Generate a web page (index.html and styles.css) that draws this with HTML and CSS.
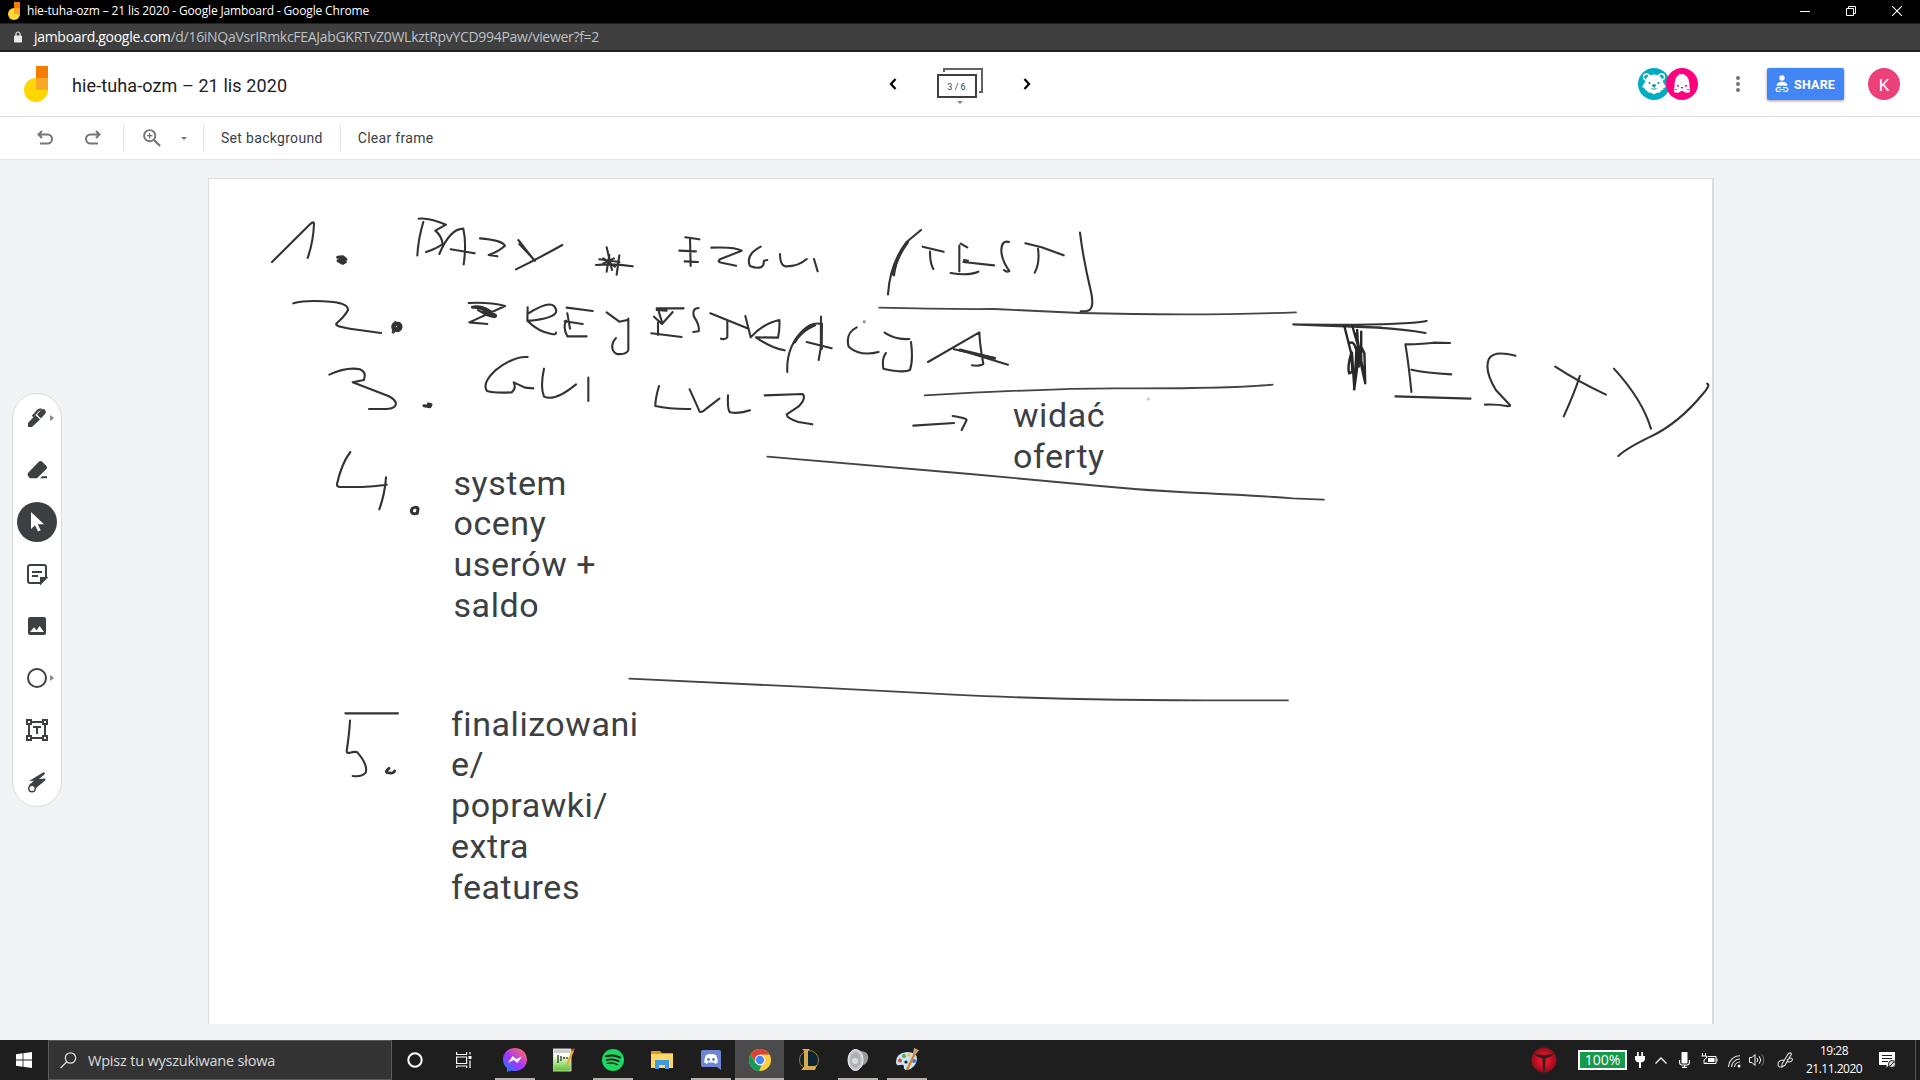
FILE: index.html
```html
<!DOCTYPE html>
<html lang="pl">
<head>
<meta charset="utf-8">
<title>hie-tuha-ozm – 21 lis 2020 - Google Jamboard</title>
<link rel="stylesheet" href="styles.css">
</head>
<body>
<div class="titlebar">
  <svg class="favicon" width="12" height="18" viewBox="0 0 24 36"><circle cx="12" cy="24" r="12" fill="#fdd835"/><path fill="#f57c00" d="M12 0h12v12H12z"/><path fill="#f9a825" d="M12 12h12v12H12z"/></svg>
  <span class="window-title">hie-tuha-ozm – 21 lis 2020 - Google Jamboard - Google Chrome</span>
  <div class="window-controls">
    <svg width="10" height="10"><path d="M0 5.500h10" stroke="#fff"/></svg>
    <svg width="10" height="10" fill="none" stroke="#fff"><path d="M.5 2.500h7v7h-7zM2.500 2.500v-2h7v7h-2"/></svg>
    <svg width="10" height="10"><path d="M0 0l10 10M10 0L0 10" stroke="#fff" stroke-width="1.100"/></svg>
  </div>
</div>
<div class="addressbar">
  <svg width="8" height="12" viewBox="0 0 8 12"><path d="M2 5V3a2 2 0 0 1 4 0v2" fill="none" stroke="#e8eaed" stroke-width="1.200"/><rect y="4.500" width="8" height="7" rx=".8" fill="#e8eaed"/></svg>
  <span class="url"><b>jamboard.google.com</b>/d/16iNQaVsrIRmkcFEAJabGKRTvZ0WLkztRpvYCD994Paw/viewer?f=2</span>
</div>

<header class="header">
  <div class="brand">
    <svg width="24" height="36" viewBox="0 0 24 36"><circle cx="12" cy="24" r="12" fill="#ffd600"/><path fill="#f57c00" d="M12 0h12v12H12z"/><path fill="#f9a825" d="M12 12h12v12H12z"/></svg>
    <h1 class="doc-title">hie-tuha-ozm – 21 lis 2020</h1>
  </div>
  <div class="frame-nav">
    <svg width="8" height="12" viewBox="0 0 8 12"><path d="M6.500 1L2 6l4.500 5" fill="none" stroke="#000" stroke-width="2.200"/></svg>
    <div class="frames">
      <svg width="46" height="36" viewBox="0 0 46 36" fill="none"><path d="M7 4V1h38v23h-3" stroke="#5f6368" stroke-width="2"/><path d="M1 7h38v22H1z" stroke="#3c4043" stroke-width="2"/><path d="M20 33h6l-3 3z" fill="#80868b"/></svg>
      <span class="frame-count">3 / 6</span>
    </div>
    <svg width="8" height="12" viewBox="0 0 8 12"><path d="M1.500 1L6 6l-4.500 5" fill="none" stroke="#000" stroke-width="2.200"/></svg>
  </div>
  <div class="account">
    <div class="viewers">
      <svg width="32" height="32" viewBox="0 0 32 32"><circle cx="16" cy="16" r="16" fill="#00acc1"/><circle cx="8.500" cy="9" r="3" fill="#00acc1" stroke="#fff" stroke-width="1.300"/><circle cx="23.500" cy="9" r="3" fill="#00acc1" stroke="#fff" stroke-width="1.300"/><path fill="#fff" d="M16 6.500c5 0 8.500 3 9 7.500l3 5-2.500 1-.5 2-2 .5-1 2-3 .3-3 1.700-3-1.700-3-.3-1-2-2-.5-.5-2-2.500-1 3-5c.5-4.500 4-7.500 9-7.500z"/><g fill="#00899c"><circle cx="11.500" cy="15" r="1"/><circle cx="20.500" cy="15" r="1"/><ellipse cx="16" cy="17.500" rx="2" ry="1.200"/></g><path d="M16 18v2m-2.500.5q2.500 1.500 5 0" stroke="#00899c" stroke-width=".9" fill="none"/></svg>
      <svg class="viewer-front" width="32" height="32" viewBox="0 0 32 32"><circle cx="16" cy="16" r="16" fill="#ff007f"/><path fill="#fff" d="M8.500 19C8.500 12 10 8 13 7l.5-1.300 2 .8 2-.8L18.500 7c3.500 1 5 5 5 12l.8 2-.8 3.500-4 .3L16 22.500l-3.500 2.300-4-.3L7.700 21z"/><circle cx="12" cy="17.800" r="1" fill="#ff007f"/><circle cx="20" cy="17.800" r="1" fill="#ff007f"/><path d="M14.500 19h3L16 21z" fill="#ff007f"/><path d="M8 21.300l3.500.4M24 21.300l-3.500.4" stroke="#ff007f" stroke-width=".7"/></svg>
    </div>
    <svg width="4" height="16" viewBox="0 0 4 16" fill="#757575"><circle cx="2" cy="2" r="2"/><circle cx="2" cy="8" r="2"/><circle cx="2" cy="14" r="2"/></svg>
    <button class="share">
      <svg width="14" height="18" viewBox="0 0 14 18"><circle cx="7" cy="3" r="2.700" fill="#fff"/><path fill="#fff" d="M1.500 10.800c0-5.500 11-5.500 11 0z"/><g fill="none" stroke="#fff" stroke-width="1.200"><path d="M6 12.600H3a1.900 1.900 0 0 0 0 3.800H6M8 12.600h3a1.900 1.900 0 0 1 0 3.800H8M4.500 14.500h5"/></g></svg>
      <span>SHARE</span>
    </button>
    <span class="avatar">K</span>
  </div>
</header>

<nav class="actionbar">
  <svg class="undo" width="16" height="16" viewBox="0 0 16 16" fill="none" stroke="#757575" stroke-width="2"><path d="M5 1L1.500 4.500 5 8M2 4.500h8.500a4.200 4.200 0 0 1 0 9H3"/></svg>
  <svg class="redo" width="16" height="16" viewBox="0 0 16 16" fill="none" stroke="#757575" stroke-width="2"><path d="M11 1l3.500 3.500L11 8M14 4.500H5.500a4.200 4.200 0 0 0 0 9H13"/></svg>
  <i class="rule"></i>
  <svg class="zoom" width="18" height="18" viewBox="0 0 18 18" fill="none" stroke="#757575"><circle cx="6.700" cy="6.700" r="5.600" stroke-width="1.900"/><path d="M11 11l6 6" stroke-width="2.300"/><path d="M6.700 4v5.400M4 6.700h5.400" stroke-width="1.300"/></svg>
  <svg class="caret" width="6" height="3"><path d="M0 0h6L3 3z" fill="#757575"/></svg>
  <i class="rule"></i>
  <span class="action">Set background</span>
  <i class="rule"></i>
  <span class="action">Clear frame</span>
</nav>

<main class="workspace">
  <aside class="toolbox">
    <span class="tool"><svg width="24" height="24" viewBox="0 0 24 24" fill="#3c4043"><path d="M3 17v4h4l8-7.500L10.500 9z"/><path d="M12 8.500l4-4.500c1.500-1.500 3-1 4 0s1.200 2.500 0 4l-4.200 4.500z"/><path d="M7.500 10.500l6-6.500 3-.8" fill="none" stroke="#3c4043" stroke-width="2"/></svg><i class="more"></i></span>
    <span class="tool"><svg width="24" height="24" viewBox="0 0 24 24" fill="#3c4043"><path d="M14 3.500q1.500-1 3 0l4.500 4.500q1 1.500 0 3L12 20.200H5l-2-2.200q-1-1.500 0-3zM15 20.200l2-2h5v2z"/></svg></span>
    <span class="tool active"><svg width="24" height="24" viewBox="0 0 24 24" fill="#fff"><path d="M6 2v17l4-3.800 3 6.300 2.700-1.300-3-6H19z"/></svg></span>
    <span class="tool"><svg width="24" height="24" viewBox="0 0 24 24" fill="none" stroke="#3c4043" stroke-width="2"><path d="M15.500 21H5a2 2 0 0 1-2-2V5a2 2 0 0 1 2-2h14a2 2 0 0 1 2 2v10.500M7 10h10M7 14h6"/><path d="M16 21v-5h5z" fill="#3c4043"/></svg></span>
    <span class="tool"><svg width="24" height="24" viewBox="0 0 24 24" fill="#3c4043"><path fill-rule="evenodd" d="M5 3h14a2 2 0 0 1 2 2v14a2 2 0 0 1-2 2H5a2 2 0 0 1-2-2V5a2 2 0 0 1 2-2zm0 15h14l-4.300-6-3.200 4.300L9 13.200z"/></svg></span>
    <span class="tool"><svg width="24" height="24" viewBox="0 0 24 24"><circle cx="12" cy="12" r="9" fill="none" stroke="#3c4043" stroke-width="2"/></svg><i class="more"></i></span>
    <span class="tool"><svg width="24" height="24" viewBox="0 0 24 24" fill="none" stroke="#3c4043" stroke-width="2"><path d="M2 2h4v4H2zM18 2h4v4h-4zM2 18h4v4H2zM18 18h4v4h-4zM6 4h12M6 20h12M4 6v12M20 6v12M8 9h8M12 9v7"/></svg></span>
    <span class="tool"><svg width="24" height="24" viewBox="0 0 24 24" fill="#3c4043"><path d="M4 11L18.500 2.200q2 .2 1.200 2L14 9l6-.5q1 1 0 2L10 19l-6-4 5-4.300z"/><circle cx="7" cy="18.500" r="3.200" fill="#fff" stroke="#3c4043" stroke-width="1.400"/></svg></span>
  </aside>

  <section class="board">
    <svg class="ink" viewBox="209 179 1503 845" width="1503" height="845">
      <g transform="translate(250 200) scale(.33333)">
        <path d="M66 186L180 73Q192 62 192 72Q190 125 173 174"/>
        <path class="blot" d="M263 172l15 -2 10 8-24 4 14 8 8-4-12-6-6-8"/>
        <path d="M506 56Q535 52 588 74L556 92Q575 108 578 132Q560 146 528 156M520 66Q505 115 502 166M568 162Q600 86 640 86Q650 130 641 193M602 148L674 160M690 115Q755 120 765 137Q745 155 716 165L742 169M805 120L852 180M808 132L855 182M798 208Q860 178 937 135"/>
        <path d="M1038 195Q1090 190 1148 199M1048 178L1108 186M1070 142L1086 210M1078 165L1070 215M1108 166L1100 224M1060 190L1092 175M1060 175L1095 200"/>
        <path d="M130 310Q170 298 250 306Q295 312 294 330Q285 348 260 370Q250 378 300 386L393 399"/>
        <path class="blot" d="M436 368q-12 8-5 22 20 6 22-8 0-14-12-12-14 8-4 16 10 2 8-8"/><circle cx="430" cy="396" r="2"/>
        <path d="M656 309Q720 306 765 318L658 367L712 372M666 321Q700 312 738 346Q740 356 712 346L684 330M833 322L832 362Q850 362 880 356Q935 345 912 318Q895 302 832 342M832 362Q865 395 905 402Q918 405 918 398M950 323L1028 333M952 340L960 386M944 364L998 372M948 362Q938 385 952 409L1010 409M1070 337L1108 365L1132 360M1135 356V450Q1130 465 1100 462Q1080 450 1090 425L1098 414"/>
        <path class="bold" d="M668 322Q700 320 734 350L700 336"/>
        <path d="M238 524Q290 500 330 508Q350 516 342 540L308 547L415 588Q435 598 438 610Q438 626 410 627H357"/>
        <path class="blot" d="M522 617l18 3 3-6-8-2"/>
        <path d="M833 471Q790 468 735 512Q695 550 711 573Q735 580 785 577Q800 565 791 547L825 563L850 565M882 506Q870 560 882 590Q915 605 978 553M1015 533V603"/>
      </g>
      <g transform="translate(640 200) scale(.33333)">
        <path d="M136 112L178 118M150 118L152 198M118 152L168 154M134 184L174 186M214 143Q285 140 305 152L240 178Q230 184 245 188L288 197M362 140Q315 165 330 198Q360 210 370 195L372 182L382 180M420 162Q420 195 435 199Q475 200 500 177M522 177L533 214"/>
        <path d="M843 90L800 126Q750 190 744 283M804 126Q770 165 762 226M848 140L911 155M870 155Q870 190 880 207M958 137V214M962 131L982 142M970 186L1062 196M972 180L984 182M932 219Q985 228 1015 215M1107 126Q1085 120 1084 150Q1084 180 1108 213Q1100 218 1092 210M1156 130L1205 142L1271 166M1194 146Q1200 190 1184 218M1320 98Q1330 180 1353 275Q1365 330 1340 333L1322 334"/>
        <path class="bold" d="M800 130Q768 175 758 222"/>
        <path d="M50 325H131M42 350L66 372L98 336M56 334L66 366M54 368V405M34 400L125 411M50 330L80 332M176 324Q155 324 162 350Q180 378 176 394L160 396M211 340L326 386M262 362V412Q255 420 243 416M316 348L332 412Q370 370 418 360Q420 385 414 413L348 412Q395 445 434 451M442 516Q438 440 490 390Q515 365 546 372M462 428Q480 395 525 376M543 350V440L536 480M546 372L542 450M500 426L575 445M650 382Q615 400 626 440Q660 470 716 456M734 398Q765 420 808 417M813 426Q820 480 810 510Q790 520 730 506Q725 475 738 459M864 486L1018 397Q1020 440 1030 492Q1015 500 996 496M942 448L1064 474M960 450L1104 494"/>
        <path class="bold" d="M464 426Q482 394 522 374M544 372V446M960 450L1064 475"/>
        <circle cx="673" cy="365" r="2" opacity=".5"/>
        <path d="M57 558Q46 595 46 618Q90 628 151 627M149 568L179 635Q185 640 200 625L238 596M264 586Q262 630 270 637Q300 642 330 631M374 586L488 582Q500 595 475 620L440 643Q440 655 475 666L517 673M820 677L942 669M938 648Q985 655 979 662L965 690"/>
        <path class="thin" d="M718 323Q900 328 1062 327L1320 339Q1680 348 1968 337M854 586L1000 578Q1300 564 1440 565Q1780 566 1898 554"/>
      </g>
      <g transform="translate(1100 290) scale(.40185 .33333)">
        <path class="thin" d="M0 588Q100 600 200 606Q380 616 480 625L557 629"/>
        <path d="M481 103Q740 108 813 93M481 103L690 113Q760 118 810 129M500 104L700 113"/>
        <path class="dense" d="M608 108L625 190Q615 230 620 250L628 245 625 185M620 160q12-10 18 20l-5 118-6-110M628 108L645 180Q635 285 632 298M640 120l4 110M650 125v100l10 55-2-90-8-20M638 130L655 245M643 180l10 60"/>
        <path d="M760 163Q810 162 830 158L871 159M760 163Q768 220 775 306M775 239Q810 248 874 253M735 319L922 326M1034 197Q980 180 968 206Q955 240 985 300L1020 345Q1022 350 1012 348Q985 342 958 344M1133 230Q1190 275 1259 314M1194 258Q1182 305 1154 379M1279 236Q1350 330 1371 416M1290 498Q1310 475 1370 440Q1440 400 1500 312Q1520 285 1511 281"/>
        <circle cx="120" cy="327" r="1.500" opacity=".3"/>
      </g>
      <g transform="translate(320 440) scale(.33333)">
        <path d="M91 36Q65 70 51 132Q50 141 60 141H125Q160 140 200 134M198 112Q195 160 178 208"/>
        <path class="blot" d="M276 206q14-8 18 0l-2 14q-16 4-18-6z"/>
        <path d="M76 820H234M90 842Q88 880 80 934Q80 940 90 938Q105 934 112 937Q145 975 137 998Q125 1012 98 1008"/>
        <path class="bold" d="M207 985Q195 995 202 998Q220 1002 224 993"/>
        <path class="thin" d="M1342 50Q1460 61 1950 102L2340 138M928 716L1440 740 1900 764Q2300 784 2904 781"/>
      </g>
    </svg>
    <p class="note note-offers">widać<br>oferty</p>
    <p class="note note-ratings">system<br>oceny<br>userów +<br>saldo</p>
    <p class="note note-final">finalizowani<br>e/<br>poprawki/<br>extra<br>features</p>
  </section>
</main>

<footer class="taskbar">
  <span class="start"><svg width="16" height="16" viewBox="0 0 16 16" fill="#fff"><path d="M0 2.300L6.600 1.300v6.200H0zM7.400 1.200L16 0v7.500H7.400zM0 8.400h6.600v6.300L0 13.800zM7.400 8.400H16V16l-8.600-1.200z"/></svg></span>
  <div class="search">
    <svg width="17" height="17" viewBox="0 0 17 17" fill="none" stroke="#ddd" stroke-width="1.300"><circle cx="10.500" cy="6" r="5.200"/><path d="M6.800 9.800L.6 16"/></svg>
    <span>Wpisz tu wyszukiwane słowa</span>
  </div>
  <div class="apps">
    <span class="app system"><svg width="18" height="18"><circle cx="9" cy="9" r="6.700" fill="none" stroke="#fff" stroke-width="2"/></svg></span>
    <span class="app system"><svg width="16" height="16" fill="none" stroke="#fff" stroke-width="1.200"><path d="M.6 0v2.500h10V0M.6 5h10v6.500H.6zM.6 16v-2h10v2M14 0v2.500M14 8.500V16"/><path d="M12.500 4h3v3h-3z" fill="#fff" stroke="none"/></svg></span>
    <span class="app open"><svg width="24" height="24" viewBox="0 0 24 24"><defs><linearGradient id="msg" x1="0" y1="1" x2=".8" y2="0"><stop stop-color="#0a8cff"/><stop offset=".5" stop-color="#a033ff"/><stop offset="1" stop-color="#ff6968"/></linearGradient></defs><path fill="url(#msg)" d="M12 0c7 0 12 5 12 11.500S19 23 12 23q-2 0-3.500-.5L4 24v-4C1.500 18 0 15 0 11.500 0 5 5 0 12 0z"/><path fill="#fff" d="M5 15l4.500-7 4 3L19 8.500 14.500 15l-4-3z"/></svg></span>
    <span class="app"><svg width="22" height="24" viewBox="0 0 22 24"><defs><linearGradient id="npp" x2="0" y2="1"><stop offset=".3" stop-color="#f7fff0"/><stop offset="1" stop-color="#58c322"/></linearGradient></defs><path d="M0 1h18v22H0z" fill="url(#npp)" stroke="#ccc"/><path d="M1 2h16v3H1z" fill="#ccc"/><path d="M5 7v8M8 8v5M10 10h2M14 9v2" stroke="#333" stroke-width="1.300"/><path d="M13 18l1-4L19 2l2 1-5 12z" fill="#f5a623"/><path d="M19 2l1-2 2 1-1 2z" fill="#b44"/></svg></span>
    <span class="app open"><svg width="22" height="22" viewBox="0 0 22 22"><circle cx="11" cy="11" r="11" fill="#1ed760"/><g fill="none" stroke="#191919" stroke-linecap="round"><path d="M4 7.300q8-2.300 14 1.200" stroke-width="2"/><path d="M4.800 11q6.500-1.800 12 1.200" stroke-width="1.700"/><path d="M5.300 14.400q5.500-1.400 10 1.200" stroke-width="1.400"/></g></svg></span>
    <span class="app"><svg width="22" height="20" viewBox="0 0 22 20"><path fill="#d79a1e" d="M0 1h9l2 2H22v5H0z"/><path fill="#ffd667" d="M0 4h22v14H0z"/><path fill="#3f9be0" d="M4 19v-9h14v9h-4v-4H8v4z"/></svg></span>
    <span class="app open"><svg width="20" height="20" viewBox="0 0 20 20"><path fill="#6f85d2" d="M2 0h16q2 0 2 2v18l-4-3H2q-2 0-2-2V2q0-2 2-2z"/><path fill="#fff" d="M5 5q5-2 10 0 2 4 1.800 7.500L14 14l-1-1.500H7L6 14l-2.800-1.500Q3 9 5 5z"/><circle cx="7.500" cy="9.500" r="1.400" fill="#6077c5"/><circle cx="12.500" cy="9.500" r="1.400" fill="#6077c5"/></svg></span>
    <span class="app open current"><svg width="22" height="22" viewBox="0 0 22 22"><circle cx="11" cy="11" r="11" fill="#ffcd40"/><path fill="#db4437" d="M1.500 5.500a11 11 0 0 1 19 0H11L6.200 13.700z"/><path fill="#0f9d58" d="M1.500 5.500L6.200 13.700 11 16.500h1.500L10 22A11 11 0 0 1 1.500 5.500z"/><circle cx="11" cy="11" r="5.200" fill="#fff"/><circle cx="11" cy="11" r="4.200" fill="#4285f4"/></svg></span>
    <span class="app"><svg width="22" height="24" viewBox="0 0 22 24"><circle cx="11" cy="12" r="9.500" fill="#0a2633" stroke="#a07a3b"/><path fill="#d9a94e" d="M4 1h8l-2 2v15h7l2-1-2 5H3l3-3V3z"/></svg></span>
    <span class="app open"><svg width="22" height="24" viewBox="0 0 22 24"><path d="M7 1l11 3q4 2 3 7-1 5-5 6l-3 3-5 2z" fill="#9a9da0"/><ellipse cx="8.500" cy="12" rx="7.500" ry="10.500" fill="#c9cccf" stroke="#eee"/><ellipse cx="8.500" cy="12" rx="5.300" ry="8" fill="#aeb1b4"/><circle cx="8" cy="13" r="3" fill="#dadcde"/></svg></span>
    <span class="app open"><svg width="24" height="24" viewBox="0 0 24 24"><path fill="#c9e4f5" d="M1 14Q1 5 12 4q10 0 10 7-1 9-10 11-4 0-3-4-1-2-4-1-4 1-4-3z"/><circle cx="5" cy="12.500" r="2" fill="#e2463f"/><circle cx="9" cy="8" r="2" fill="#58a942"/><circle cx="14" cy="7" r="1.800" fill="#f0c12f"/><circle cx="11" cy="14" r="1.600" fill="#222"/><circle cx="19" cy="13" r="2" fill="#3c7bd6"/><path d="M12 22L20 5" stroke="#d77b27" stroke-width="2.200"/><path fill="#c9a273" d="M18 5l1-5 5 2-3 4z"/></svg></span>
  </div>
  <div class="tray">
    <svg class="ball" width="26" height="26" viewBox="0 0 26 26"><defs><radialGradient id="ball"><stop offset=".4" stop-color="#e0142b"/><stop offset="1" stop-color="#8e0d18"/></radialGradient></defs><circle cx="13" cy="13" r="12.500" fill="url(#ball)"/><path fill="#2a2023" d="M3.500 6.500q9.500 3 19 0l-3.500 3.500-4.500 1.500L14 22l-1 3-1-3-.5-10.500L7 10z"/></svg>
    <span class="battery">100%</span>
    <svg class="plug" width="10" height="16" viewBox="0 0 10 16" fill="#fff"><path d="M2 0h1.700v4h2.600V0H8v4h2v3q-.5 3-4 3.500V16H4v-5.500Q.5 10 0 7V4h2z"/></svg>
    <svg class="chevron" width="12" height="7" fill="none" stroke="#fff" stroke-width="1.300"><path d="M.5 6.500L6 1l5.500 5.500"/></svg>
    <svg class="mic" width="11" height="16" viewBox="0 0 11 16"><rect x="2.500" width="6" height="11.500" rx=".8" fill="#fff"/><path d="M.6 8v2.500q0 2.500 2.500 2.500h4.800q2.500 0 2.500-2.500V8M5.500 13v2.400M3 15.400h5" fill="none" stroke="#fff" stroke-width="1.100"/></svg>
    <svg class="charge" width="17" height="14" viewBox="0 0 17 14" fill="none" stroke="#fff"><path d="M6.500 3.500h8.500v7H5V9M16 5.500v3M1.500 0v3M4.500 0v3M.5 3h5v2L3 7v3.500h2"/><path d="M7 5h6.500v4H7z" fill="#fff" stroke="none"/></svg>
    <svg class="wifi" width="13" height="13" viewBox="0 0 13 13" fill="none" stroke="#ddd" stroke-width="1.100"><path d="M.5 12A11.500 11.500 0 0 1 12 .7M3.500 12A8.500 8.500 0 0 1 12 4M6.500 12A5.500 5.500 0 0 1 12 7"/><circle cx="11" cy="11" r="1.500" fill="#fff" stroke="none"/></svg>
    <svg class="volume" width="17" height="14" viewBox="0 0 17 14" fill="none" stroke="#fff"><path d="M.5 4.500h2.500L6 1.500v11L3 9.500H.5zM8 5q1.500 2 0 4M10.200 3.200q3 3.800 0 7.600"/><path d="M12.600 1.200q4.500 5.800 0 11.600" stroke="#777"/></svg>
    <svg class="pen" width="16" height="16" viewBox="0 0 16 16" fill="none" stroke="#ddd" stroke-width="1.100"><path d="M5 12L11.500 1.500q2-1.500 3 .5L8 13l-3 2zM10 8q5-4 5.500 0-2 3-5 1.500M7 8Q1 8 1 12.500q0 3 4 2.500"/></svg>
    <div class="clock"><span>19:28</span><span>21.11.2020</span></div>
    <svg class="notify" width="17" height="16" viewBox="0 0 17 16"><path fill="#fff" d="M0 0h16v13h-6L7.500 15.500V13H0z"/><path d="M3 3.500h10M3 6.500h10M3 9.500h6" stroke="#1e1e1e"/><circle cx="13" cy="12" r="3.500" fill="#ddd" stroke="#1e1e1e"/><path d="M11 14l4-4" stroke="#1e1e1e"/></svg>
  </div>
</footer>
</body>
</html>
```
FILE: styles.css
```css
* { box-sizing: border-box; }

body {
  margin: 0;
  width: 1920px;
  height: 1080px;
  overflow: hidden;
  display: flex;
  flex-direction: column;
  background: #f1f3f4;
  font-family: Roboto, sans-serif;
}

svg { display: block; flex: none; }
b { font-weight: inherit; }

/* Browser window */
.titlebar {
  height: 24px;
  display: flex;
  align-items: center;
  gap: 7px;
  padding: 0 18px 2px 8px;
  background: #000;
  border-bottom: 1px solid #222;
  color: #fff;
  font: 12px/20px "Open Sans", "Noto Sans", sans-serif;
  letter-spacing: -0.14px;
  white-space: nowrap;
}

.window-controls { margin-left: auto; display: flex; gap: 36px; }

.addressbar {
  height: 28px;
  display: flex;
  align-items: center;
  gap: 12px;
  padding: 0 14px;
  background: #3f3f3f;
  border-bottom: 2px solid #1f1f1f;
  color: #bdc1c6;
  font: 14px/20px "Open Sans", "Noto Sans", sans-serif;
  letter-spacing: -0.3px;
}
.addressbar b { color: #fff; }

/* Document header */
.header {
  height: 65px;
  display: grid;
  grid-template-columns: 1fr 142px 1fr;
  align-items: center;
  padding: 0 20px 0 24px;
  background: #fff;
  border-bottom: 1px solid #e0e0e0;
}

.brand { display: flex; align-items: center; gap: 24px; }
.doc-title {
  margin: 4px 0 0;
  font-size: 18px;
  font-weight: 400;
  line-height: 24px;
  letter-spacing: 0.1px;
  color: #212121;
}

.frame-nav { display: flex; align-items: center; justify-content: space-between; margin-left: -2px; margin-right: 2px; }
.frames { display: grid; margin-right: 1px; padding-top: 3px; }
.frames > * { grid-area: 1 / 1; }
.frame-count {
  width: 40px;
  padding-top: 13px;
  text-align: center;
  font-size: 9px;
  line-height: 12px;
  color: #3c4043;
}

.account { display: flex; align-items: center; justify-content: flex-end; }
.viewers { display: flex; margin-right: 38px; }
.viewer-front { margin-left: -4px; }
.share {
  width: 77px;
  height: 32px;
  margin: 0 24px 0 27px;
  padding: 0 8px;
  display: flex;
  align-items: center;
  gap: 5px;
  border: 0;
  border-radius: 2px;
  background: #4285f4;
  box-shadow: 0 1px 3px rgba(0, 0, 0, 0.4);
  color: #fff;
  font: 700 12.5px Roboto, sans-serif;
  letter-spacing: 0.2px;
}
.avatar {
  width: 32px;
  height: 32px;
  border-radius: 50%;
  background: #ec407a;
  color: #fff;
  font-size: 17px;
  line-height: 34px;
  text-align: center;
}

/* Undo, zoom and frame actions */
.actionbar {
  height: 43px;
  display: flex;
  align-items: center;
  padding-left: 37px;
  background: #fff;
  border-bottom: 1px solid #e4e4e4;
}
.redo { margin: 0 22px 0 32px; }
.rule { width: 1px; height: 26px; background: #e0e0e0; }
.zoom { margin: 0 20px 0 19px; }
.caret { margin-right: 16px; }
.action {
  margin: 0 17px;
  font-size: 14px;
  letter-spacing: 0.31px;
  color: #3c4043;
}

/* Workspace */
.workspace { flex: 1; display: flex; align-items: flex-start; }

.toolbox {
  width: 50px;
  height: 414px;
  margin: 233px 146px 0 12px;
  padding: 4px 0;
  display: flex;
  flex-direction: column;
  align-items: center;
  gap: 12px;
  background: #fff;
  border: 1px solid #dadce0;
  border-radius: 25px;
}
.tool {
  position: relative;
  width: 40px;
  height: 40px;
  flex: none;
  display: grid;
  place-items: center;
  border-radius: 50%;
}
.tool.active { background: #3c4043; }
.more {
  position: absolute;
  left: 33px;
  top: 17px;
  border: 3px solid transparent;
  border-left: 4px solid #80868b;
  border-right: 0;
}

.board {
  position: relative;
  width: 1506px;
  height: 846px;
  margin-top: 18px;
  background: #fff;
  border: 1px solid #dadce0;
  border-right-width: 2px;
  border-bottom: 0;
}
.ink {
  fill: none;
  stroke: #333;
  stroke-width: 2.1px;
  stroke-linecap: round;
  stroke-linejoin: round;
}
.ink * { vector-effect: non-scaling-stroke; }
.ink .thin { stroke-width: 1.8px; stroke: #444; }
.ink .bold { stroke-width: 2.9px; }
.ink .blot { stroke-width: 3px; }
.ink .dense { stroke-width: 2.4px; stroke: #282828; }

.note {
  position: absolute;
  margin: 0;
  font-size: 34px;
  line-height: 40.7px;
  letter-spacing: 0.55px;
  color: #3c4043;
  white-space: nowrap;
}
.note-offers { left: 804px; top: 216px; }
.note-ratings { left: 244.5px; top: 283.7px; }
.note-final { left: 242px; top: 524.7px; }

/* Windows taskbar */
.taskbar {
  height: 40px;
  display: flex;
  background: #1e1e1e;
  color: #fff;
  font-family: "Open Sans", "Noto Sans", sans-serif;
}
.start { width: 48px; display: grid; place-items: center; }
.search {
  width: 344px;
  display: flex;
  align-items: center;
  gap: 11px;
  padding-left: 11px;
  background: #333;
  border: 1px solid #5a5a5a;
  color: #dcdcdc;
  font-size: 14.5px;
  letter-spacing: -0.2px;
}
.apps { display: flex; }
.app {
  width: 49px;
  display: grid;
  place-items: center;
  background: linear-gradient(#b5b0aa, #b5b0aa) bottom / 0 2px no-repeat;
}
.app.system { padding-right: 3px; }
.app.open { background-size: 40px 2px; }
.app.current { background-color: #4b4b4b; background-size: 49px 2px; }

.tray {
  width: 389px;
  margin: 0 4px 0 auto;
  padding-left: 4px;
  display: flex;
  align-items: center;
  border-right: 1px solid #555;
}
.battery {
  width: 49px;
  height: 20px;
  margin-left: 21px;
  border: 2px solid #fff;
  background: #16994b;
  text-align: center;
  font-size: 14px;
  line-height: 16px;
}
.battery + .plug { margin-left: 8px; }
.chevron { margin-left: 10px; }
.mic { margin-left: 12px; }
.charge { margin-left: 11px; }
.wifi { margin-left: 10px; margin-top: 3px; }
.volume { margin-left: 8px; }
.pen { margin-left: 11px; }
.clock {
  width: 56px;
  margin-left: 13px;
  display: flex;
  flex-direction: column;
  align-items: center;
  font-size: 12px;
  line-height: 18px;
  letter-spacing: -0.5px;
}
.notify { margin-left: 17px; }
```
